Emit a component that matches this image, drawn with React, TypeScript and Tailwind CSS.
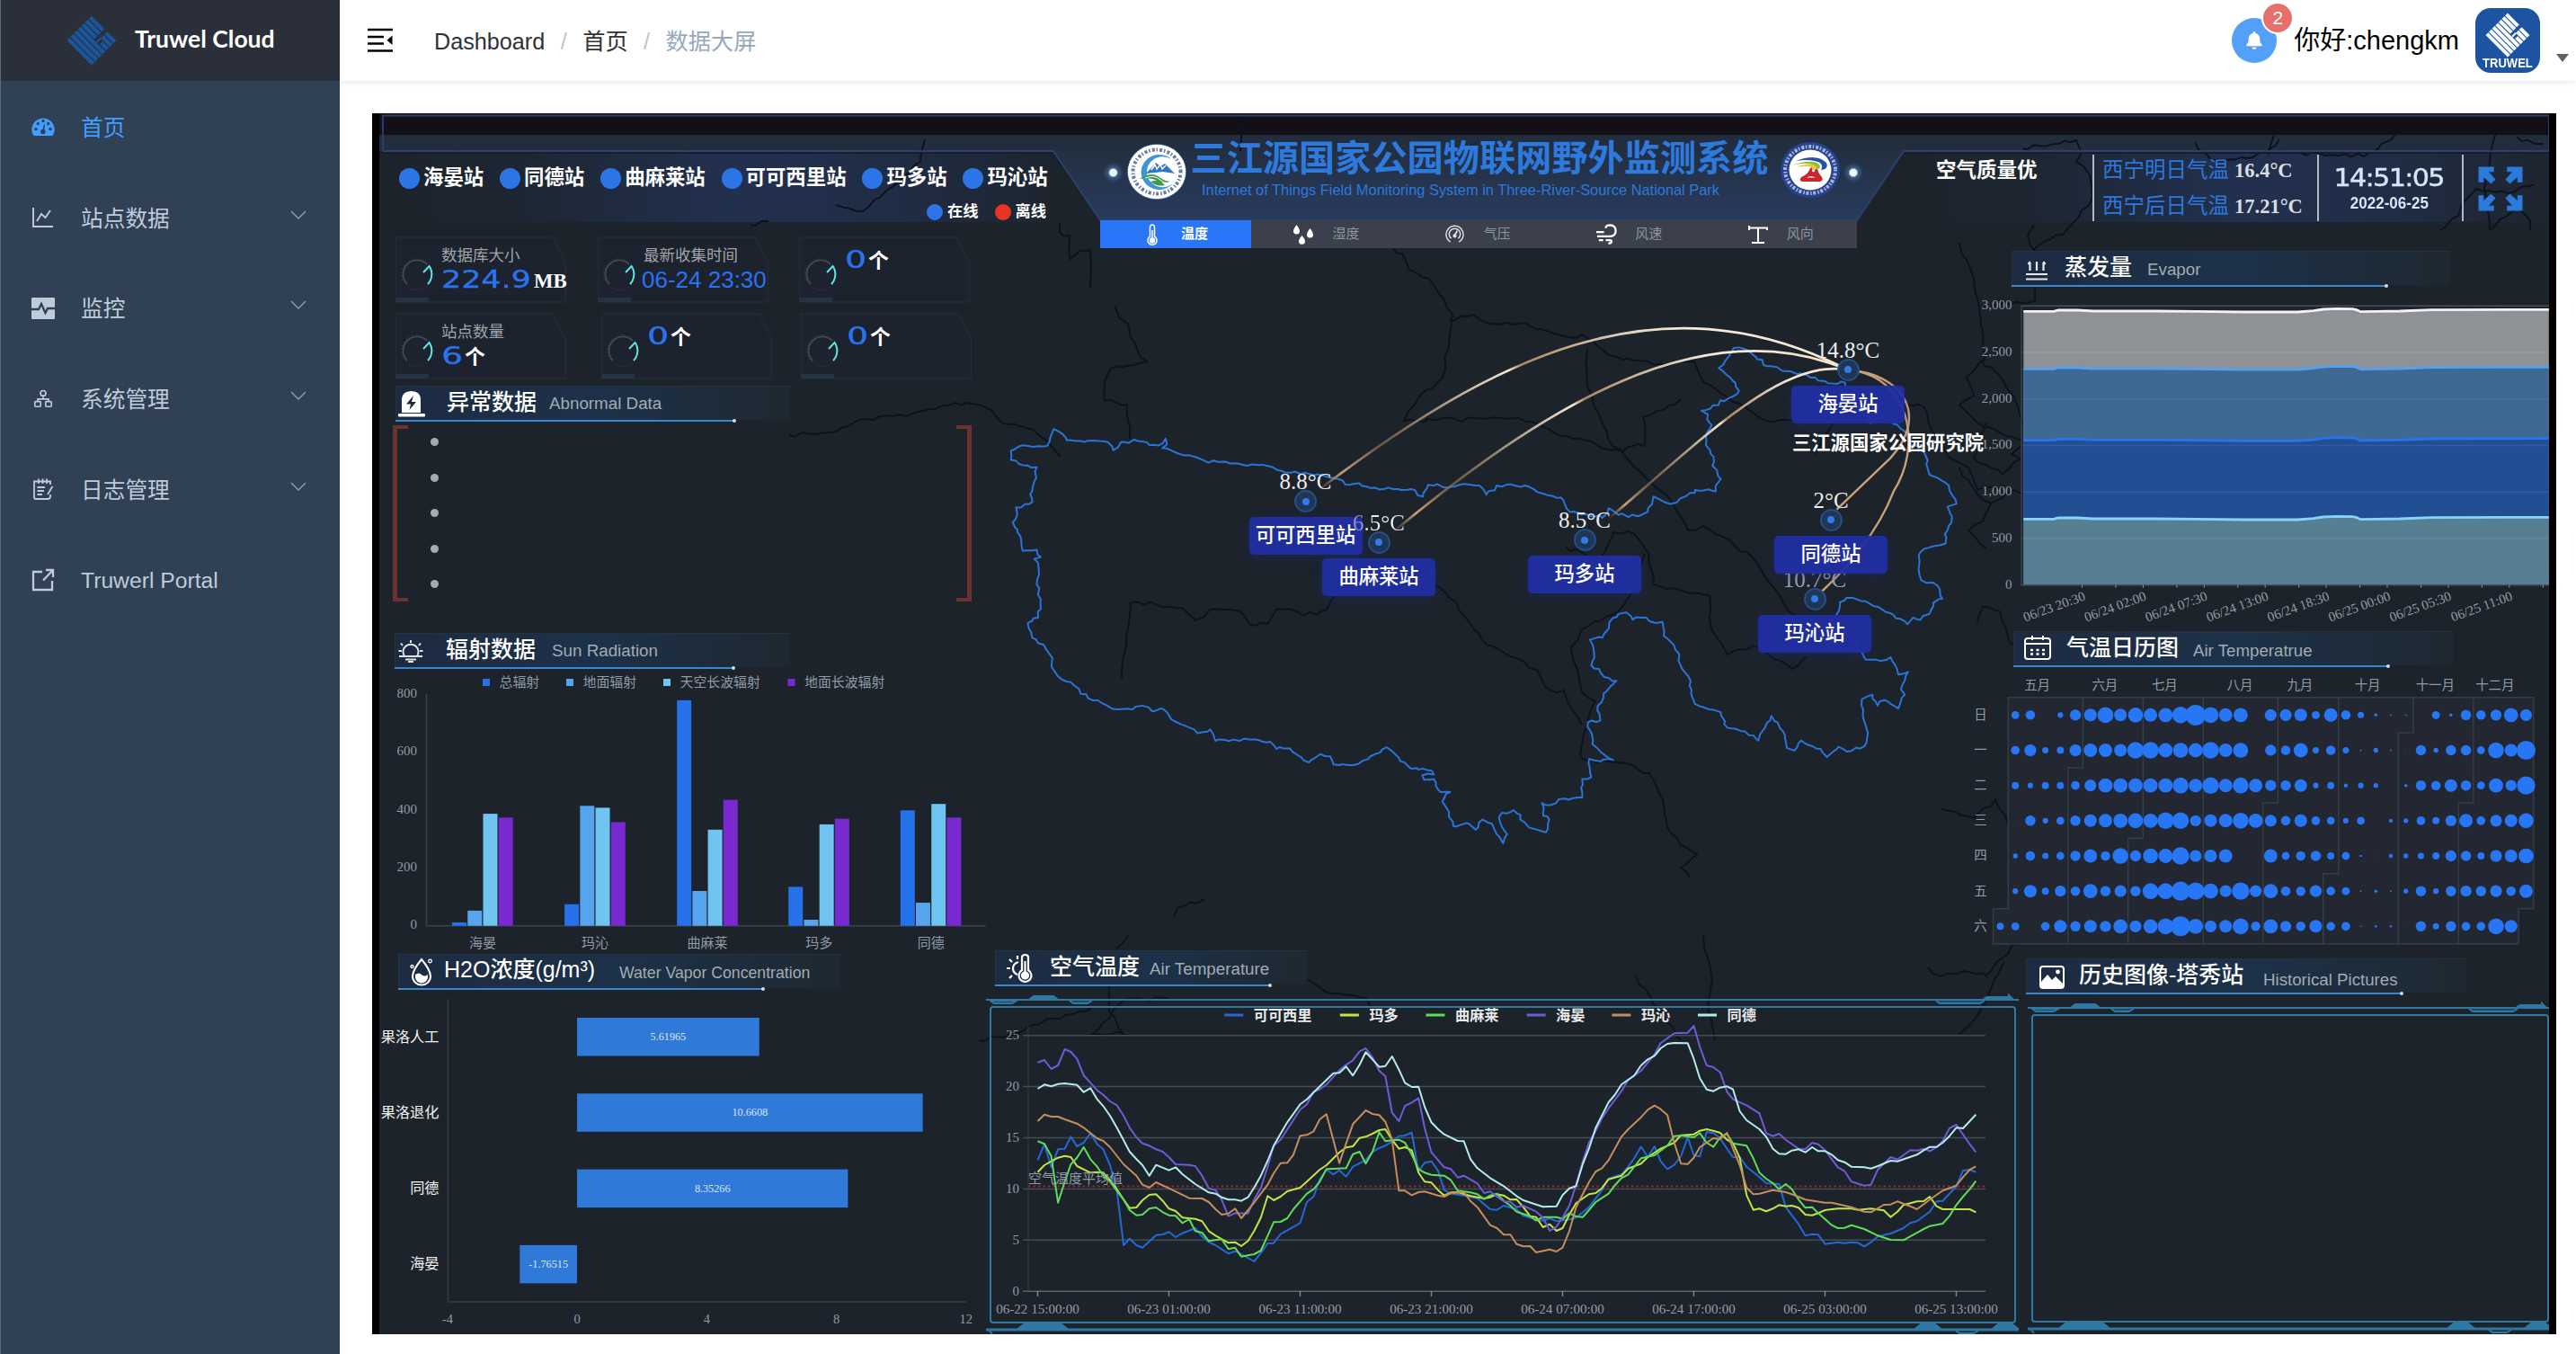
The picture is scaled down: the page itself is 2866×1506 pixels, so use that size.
import React from "react";
import { FaBell } from "react-icons/fa";

type Pt = [number, number];

const parse = (s: string): Pt[] =>
  s.trim().split(/\s+/).map((p) => p.split(",").map(Number) as Pt);

/* Breaks every segment into short, slightly displaced pieces, as a border line on a map has. */
const rough = (s: string, amp: number): string => {
  const pts = parse(s);
  let seed = 7;
  const rnd = () => {
    seed = (seed * 16807) % 2147483647;
    return seed / 2147483647 - 0.5;
  };
  const out: Pt[] = [pts[0]];
  for (let i = 1; i < pts.length; i++) {
    const [x0, y0] = pts[i - 1];
    const [x1, y1] = pts[i];
    const d = Math.hypot(x1 - x0, (y1 - y0) / 1.8);
    const n = Math.max(1, Math.round(d / 7));
    for (let k = 1; k < n; k++) {
      out.push([x0 + ((x1 - x0) * k) / n + rnd() * amp, y0 + ((y1 - y0) * k) / n + rnd() * amp * 1.8]);
    }
    out.push([x1, y1]);
  }
  return out.map((p) => p[0].toFixed(1) + "," + p[1].toFixed(1)).join(" ");
};

const SERIF = "font-['Liberation_Serif','Noto_Sans_CJK_SC',serif]";
const SANS = "font-['Liberation_Sans','Noto_Sans_CJK_SC',sans-serif]";

/* ------------------------------------------------------------------ logos */

function Lozenge({ className, color }: { className: string; color: string }) {
  return (
    <svg viewBox="0 0 52 52" className={className} fill="none" stroke={color} strokeWidth="4.2">
      <g transform="translate(26 26) rotate(45)">
        <path d="M-18 -15.800H1M-18 -10.500H1M-18 -5.200H1" />
        <path d="M-18 0.100H18M-18 5.400H18M-18 10.700H18M-18 16H18" />
        <path d="M5 -15.800H18M5 -10.500H18M9 -5.200H18" />
        <path d="M5 -8.500V-2.500" strokeWidth="2" />
      </g>
    </svg>
  );
}

/* ---------------------------------------------------------------- sidebar */

const menuIcons: Record<string, React.ReactNode> = {
  home: (
    <svg viewBox="0 0 26 22" className="h-[22px] w-[26px]">
      <path d="M2.5 21A12.6 12.6 0 1 1 23.500 21Z" fill="#409eff" />
      <g fill="#304156">
        <circle cx="5" cy="13.500" r="1.700" />
        <circle cx="7.300" cy="7.500" r="1.700" />
        <circle cx="13" cy="4.500" r="1.700" />
        <circle cx="18.700" cy="7.500" r="1.700" />
        <circle cx="21" cy="13.500" r="1.700" />
        <circle cx="12.800" cy="16.500" r="2.800" />
        <path d="M12 16 L14 8 L15 8.300 L14 17Z" />
      </g>
    </svg>
  ),
  chart: (
    <svg viewBox="0 0 26 26" className="h-[26px] w-[26px]" fill="none" stroke="#bfcbd9" strokeWidth="1.900">
      <path d="M2 2V23H24M6 17L11 9L15.500 13L21 5" />
    </svg>
  ),
  monitor: (
    <svg viewBox="0 0 26 26" className="h-[26px] w-[26px]">
      <rect x="0" y="1" width="26" height="24" rx="1" fill="#bfcbd9" />
      <path d="M0 14H8L11 8L15.500 18L18 13H26" fill="none" stroke="#304156" strokeWidth="2.400" />
    </svg>
  ),
  tree: (
    <svg viewBox="0 0 26 26" className="h-[24px] w-[26px]" fill="none" stroke="#bfcbd9" strokeWidth="1.800">
      <circle cx="13" cy="7" r="3.200" />
      <path d="M13 10V14M6.500 17V14H19.500V17" />
      <rect x="3" y="17" width="7" height="6" rx="1" />
      <rect x="16" y="17" width="7" height="6" rx="1" />
    </svg>
  ),
  log: (
    <svg viewBox="0 0 26 26" className="h-[26px] w-[26px]" fill="none" stroke="#bfcbd9" strokeWidth="1.800">
      <path d="M21 8V4.500H3V22Q3 24 5 24H18Q21 24 21 21V19M8 1.500V7M12.500 1.500V7M17 1.500V7M6.500 11H15M6.500 15H14M6.500 19H12M23.500 10L18 19" />
    </svg>
  ),
  link: (
    <svg viewBox="0 0 26 26" className="h-[26px] w-[26px]" fill="none" stroke="#bfcbd9" strokeWidth="2.300">
      <path d="M12 4H2V24H23V14M16 2H24V10M24 2L13 13.500" />
    </svg>
  ),
};

const menu = [
  { icon: "home", text: "首页", active: true, arrow: false },
  { icon: "chart", text: "站点数据", active: false, arrow: true },
  { icon: "monitor", text: "监控", active: false, arrow: true },
  { icon: "tree", text: "系统管理", active: false, arrow: true },
  { icon: "log", text: "日志管理", active: false, arrow: true },
  { icon: "link", text: "Truwerl Portal", active: false, arrow: false },
];

function Sidebar() {
  return (
    <aside className="flex h-full w-[378px] shrink-0 flex-col border-l border-[#5d6a7b] bg-[#304156]">
      <div className="flex h-[90px] shrink-0 items-center bg-[#2b2f3a] pl-[73px]">
        <Lozenge className="size-[56px]" color="#1b559c" />
        <span className="-mt-[2px] ml-[20px] whitespace-nowrap font-[Lato,sans-serif] text-[26.500px] font-bold text-white">Truwel Cloud</span>
      </div>
      <nav className="flex flex-col pt-[1px]">
        {menu.map((m) => (
          <div key={m.text} className="flex h-[100.700px] items-center pl-[34px] pr-[37px]">
            <span className="flex w-[26px] justify-center">{menuIcons[m.icon]}</span>
            <span
              className={
                m.active
                  ? "ml-[29px] mt-[2px] text-[24.700px] text-[#409eff]"
                  : "ml-[29px] mt-[2px] text-[24.700px] text-[#bfcbd9]"
              }
            >
              {m.text}
            </span>
            {m.arrow && (
              <svg viewBox="0 0 18 10" className="mb-[7px] ml-auto h-[10px] w-[18px]" fill="none" stroke="#8d98a6" strokeWidth="1.500">
                <path d="M1 1L9 9L17 1" />
              </svg>
            )}
          </div>
        ))}
      </nav>
    </aside>
  );
}

/* ----------------------------------------------------------------- topbar */

function Topbar() {
  return (
    <header className="flex h-[90px] shrink-0 items-center bg-white pl-[31px] pr-[8px] shadow-[0_1px_6px_rgba(0,21,41,0.12)]">
      <svg viewBox="0 0 28 28" className="h-[28px] w-[28px]" stroke="#000" strokeWidth="2.400">
        <path d="M0 2H28M0 10H18M0 17.500H18M0 25.500H28" />
        <path d="M27.500 8.500V19L21.500 13.700Z" fill="#000" stroke="none" />
      </svg>
      <div className="ml-[46px] mt-[3px] flex items-center text-[25.200px] text-[#303133]">
        <span>Dashboard</span>
        <span className="mx-[17.500px] text-[#c0c4cc]">/</span>
        <span>首页</span>
        <span className="mx-[17.500px] text-[#c0c4cc]">/</span>
        <span className="text-[#97a8be]">数据大屏</span>
      </div>
      <div className="ml-auto flex items-center">
        <div className="relative flex size-[50px] items-center justify-center rounded-full bg-[#53a0f8]">
          <FaBell className="size-[20px] text-white" />
          <span className="absolute -top-[18px] left-[33px] flex h-[36px] w-[36px] items-center justify-center rounded-full border-2 border-white bg-[#e5706c] text-[21px] text-white">
            2
          </span>
        </div>
        <span className="ml-[19px] mt-[2px] whitespace-nowrap text-[29px] text-black">你好:chengkm</span>
        <div className="ml-[18px] flex size-[72px] flex-col items-center rounded-[17px] bg-[#1c54a2] pt-[5px]">
          <Lozenge className="size-[50px]" color="#ffffff" />
          <span className="-mt-[2px] inline-block scale-x-[0.930] text-[14px] font-bold leading-[16px] text-white">TRUWEL</span>
        </div>
        <svg viewBox="0 0 14 9" className="ml-[18px] mt-[38px] h-[9px] w-[14px]">
          <path d="M0 0H14L7 9Z" fill="#606266" />
        </svg>
      </div>
    </header>
  );
}

/* ------------------------------------------------------------ backgrounds */

const borderLine =
  "62,395 75,383 118,382 128,336 142,350 148,366 180,368 212,372 220,394 232,372 244,374 252,365 276,380 290,381 301,362 303,378 296,388 330,408 350,414 367,428 375,422 400,430 445,434 480,450 500,452 530,462 560,470 585,488 600,484 625,496 660,500 680,500 698,520 706,488 720,486 735,496 760,486 785,490 796,515 812,490 855,490 875,508 905,524 915,530 925,562 950,568 975,578 985,552 1000,570 1030,574 1045,562 1054,520 1072,536 1090,536 1100,522 1118,510 1118,502 1150,506 1158,472 1152,448 1145,436 1147,412 1135,380 1135,355 1144,325 1137,310 1138,296 1128,286 1170,252 1186,232 1172,195 1155,170 1165,150 1178,115 1195,118 1205,130 1230,165 1260,178 1330,212 1350,210 1358,260 1378,295 1388,320 1400,306 1430,324 1440,340 1448,370 1472,400 1480,460 1500,478 1510,490 1522,540 1508,548 1515,575 1510,600 1504,622 1505,648 1478,660 1466,672 1465,735 1475,755 1492,762 1500,798 1486,810 1480,840 1466,856 1455,850 1446,868 1424,842 1400,820 1386,810 1375,805 1352,796 1342,808 1337,840 1340,858 1350,890 1368,920 1382,965 1405,968 1420,958 1430,990 1432,1005 1447,998 1436,1045 1442,1060 1432,1098 1410,1075 1400,1090 1392,1060 1376,1072 1378,1100 1380,1135 1385,1165 1380,1200 1352,1215 1340,1202 1322,1230 1312,1208 1290,1195 1282,1185 1272,1212 1260,1205 1257,1170 1236,1118 1222,1160 1216,1185 1195,1160 1168,1150 1158,1108 1140,1100 1118,1085 1112,1055 1108,1010 1096,980 1094,950 1080,915 1070,900 1068,862 1052,862 1035,850 1022,856 1012,836 1000,840 986,862 985,880 975,905 956,910 962,940 958,980 970,990 978,1012 997,1022 982,1050 968,1090 972,1130 953,1135 960,1195 972,1215 992,1238 972,1242 955,1235 958,1285 944,1290 944,1340 930,1342 908,1345 900,1358 882,1355 884,1390 893,1400 888,1435 862,1422 855,1408 838,1375 820,1382 816,1400 828,1440 822,1465 812,1440 805,1412 790,1400 780,1428 765,1410 745,1418 735,1370 728,1352 740,1325 722,1320 715,1290 700,1292 697,1280 715,1278 712,1268 680,1262 670,1245 655,1222 642,1203 632,1218 605,1240 590,1252 560,1250 555,1228 540,1222 522,1245 505,1225 492,1206 472,1208 462,1188 430,1182 415,1186 378,1186 370,1155 350,1165 345,1155 318,1135 310,1128 298,1100 280,1105 265,1090 250,1100 215,1095 170,1058 160,1035 140,1018 125,985 126,960 116,935 95,905 88,865 104,850 108,800 102,760 105,718 98,690 108,685 102,665 80,668 78,640 72,610 65,590 72,568 70,550 95,535 92,515 98,480 102,440 75,432 62,420 62,395";

/* Roads and neighbouring borders, in page coordinates. */
const roads: string[] = [
  "878,484 930,480 950,470 985,462 1015,460 1040,455 1062,448 1090,450 1120,472 1150,478 1180,508",
  "1240,340 1246,354 1255,360 1268,396 1276,402 1236,410 1229,424 1229,446 1254,450 1257,488",
  "1179,247 1179,258 1190,262 1190,288 1202,278 1213,278 1213,320",
  "1550,276 1560,282 1568,300 1590,310 1616,350 1605,420 1580,440 1562,468 1690,465 1750,488 1798,500 1830,496 1830,470 1828,464 1850,456 1870,444",
  "1612,356 1640,350 1656,360 1690,360 1715,366 1745,375 1760,372 1790,395 1840,406 1885,402 1895,425 1960,466 2000,470 2050,440",
  "1766,387 1766,430 1790,490 1830,530 1860,558 1878,590 1895,585 1950,620 1990,680 2060,720",
  "1248,755 1258,670 1315,676 1330,690 1346,678 1380,680 1390,694 1410,694 1420,678 1465,684 1476,678 1490,655 1545,627 1580,640 1620,670 1640,700 1655,718 1680,730 1710,745 1725,768 1740,768 1760,806",
  "1742,608 1780,622 1796,592 1818,594 1834,615 1840,650 1880,660 1902,662 1904,700 1922,728 1950,718 1994,744 2010,730",
  "1830,616 1815,660 1800,680 1760,700 1748,720 1760,770 1775,780 1768,795 1758,840 1762,845 1800,848 1835,860 1850,890 1855,920 1870,940 1888,950 1870,965 1880,976",
  "1340,1000 1310,1010 1306,1020",
  "1256,1040 1232,1070 1234,1125 1250,1150 1215,1150 1250,1112 1300,1110",
  "1360,1090 1440,1080 1480,1105 1520,1110 1530,1130",
  "1895,1040 1905,1090 1900,1120 1908,1157",
  "1820,1085 1850,1130 1870,1157",
  "1090,1157 1130,1150 1150,1140 1215,1120",
  "2145,1076 2160,1086 2185,1080 2210,1085 2250,1040 2262,1000 2272,985 2262,930 2235,920 2220,890 2196,910 2160,900",
  "2230,1070 2215,1100 2200,1130 2180,1150",
  "2020,505 2050,450 2100,445 2140,452 2150,480 2170,510 2190,520 2200,545 2230,540",
  "2263,250 2256,262 2265,280 2264,335 2215,340",
  "2180,270 2196,310 2204,360 2208,400 2188,420 2196,440 2180,450 2200,470 2232,485 2250,490",
  "2204,400 2222,415 2240,440 2250,470 2270,490 2275,530",
  "2210,470 2196,510 2228,527 2248,510 2238,505 2250,495",
  "2180,520 2200,550 2215,560 2240,545 2270,552",
  "2215,560 2206,580 2190,590 2210,610",
  "2200,692 2206,675 2225,680 2232,700 2236,715 2260,724",
  "2250,165 2310,156 2316,170 2310,180 2325,195 2328,220 2300,255 2262,278",
  "2442,158 2460,178 2500,176 2520,170 2536,155",
  "2524,172 2530,150",
  "2560,170 2630,174 2665,150",
  "2776,150 2764,210 2770,256",
  "2800,152 2820,160 2830,160",
  "2715,256 2735,240 2740,225 2755,210 2790,215 2820,205",
  "2770,256 2800,230 2815,245 2815,256",
  "1385,128 1380,168",
  "835,250 855,246",
  "1029,155 1024,180 960,235 930,228",
];

function MapLayer() {
  return (
    <svg viewBox="422 126 2414 1358" className="absolute inset-0 h-full w-full">
      <defs>
        <linearGradient id="hl" x1="0" x2="1">
          <stop offset="0" stopColor="#22304f" stopOpacity="0" />
          <stop offset="0.2" stopColor="#22304f" stopOpacity="0.2" />
          <stop offset="0.52" stopColor="#22304f" />
          <stop offset="0.75" stopColor="#22304f" stopOpacity="0.75" />
          <stop offset="1" stopColor="#22304f" stopOpacity="0.15" />
        </linearGradient>
        <linearGradient id="hc" x1="0" x2="0" y1="0" y2="1">
          <stop offset="0" stopColor="#212c3b" />
          <stop offset="1" stopColor="#293b5e" />
        </linearGradient>
        <linearGradient id="arc" x1="0" x2="1" y1="1" y2="0">
          <stop offset="0" stopColor="#a98155" stopOpacity="0" />
          <stop offset="0.08" stopColor="#c9a075" />
          <stop offset="0.2" stopColor="#8a6d50" stopOpacity="0.7" />
          <stop offset="0.55" stopColor="#f4e6d5" />
          <stop offset="0.58" stopColor="#a8865f" />
          <stop offset="0.85" stopColor="#f6ebdd" />
          <stop offset="1" stopColor="#f4dfc5" />
        </linearGradient>
        <radialGradient id="glow">
          <stop offset="0" stopColor="#fff" />
          <stop offset="0.32" stopColor="#e8f4ff" />
          <stop offset="0.45" stopColor="#4c80ad" stopOpacity="0.6" />
          <stop offset="1" stopColor="#31567c" stopOpacity="0" />
        </radialGradient>
      </defs>
      <rect x="422" y="171" width="748" height="76" fill="url(#hl)" />
      <rect x="2112" y="171" width="724" height="76" fill="url(#hl)" />
      <rect x="422" y="126" width="2414" height="24" fill="#120f16" />
      <path d="M422 150H2836V168H2118L2066 245H1224L1172 168H422Z" fill="url(#hc)" />
      <g fill="none" stroke="#0d131c" strokeWidth="2">
        {roads.map((r) => (
          <polyline key={r} points={rough(r, 3)} />
        ))}
      </g>
      <path d="M426 167V128.500H2836V168H2118L2066 245H1224L1172 168H426" fill="none" stroke="#2b4270" strokeWidth="1.800" />
      <path d="M422 170H1170M2122 170H2836" stroke="#171d26" strokeWidth="1.500" />
      <circle cx="1238.500" cy="192" r="12" fill="url(#glow)" />
      <circle cx="2062" cy="192" r="12" fill="url(#glow)" />
      <g transform="translate(1080 340) scale(0.72066 0.40816)">
        <polyline points={rough(borderLine, 5)} fill="none" stroke="#2a74d8" strokeWidth="2" strokeLinejoin="round" vectorEffect="non-scaling-stroke" />
        <g fill="none" stroke="url(#arc)" strokeWidth="2.700">
          <path d="M535 505C800 150 1060 -92 1354 175" vectorEffect="non-scaling-stroke" />
          <path d="M650 620C880 280 1130 5 1354 175" vectorEffect="non-scaling-stroke" />
          <path d="M985 580C1120 380 1250 140 1354 175" vectorEffect="non-scaling-stroke" />
        </g>
        <g fill="none" stroke="#c9a27a" strokeWidth="2.400">
          <path d="M1354 175C1440 185 1480 300 1420 415L1337 555" vectorEffect="non-scaling-stroke" />
          <path d="M1354 175C1450 190 1470 380 1425 505C1400 620 1350 720 1313 780" vectorEffect="non-scaling-stroke" />
        </g>
      </g>
    </svg>
  );
}

const stationsOnMap = [
  { name: "海晏站", temp: "14.8°C", x: 2056, y: 411.5, dim: false },
  { name: "可可西里站", temp: "8.8°C", x: 1452.500, y: 558, dim: false },
  { name: "曲麻莱站", temp: "6.5°C", x: 1534, y: 603.500, dim: false },
  { name: "玛多站", temp: "8.5°C", x: 1763, y: 601, dim: false },
  { name: "玛沁站", temp: "10.7°C", x: 2019, y: 666.500, dim: true },
  { name: "同德站", temp: "2°C", x: 2037, y: 578.500, dim: false },
];

/* Pins sit at their geographic place on the map canvas. */
function Pins() {
  return (
    <div className={"absolute inset-0 " + SERIF}>
      {stationsOnMap.map((s) => (
        <div
          key={s.name}
          className="absolute flex w-[126px] -translate-x-1/2 flex-col items-center"
          style={{ left: s.x - 414, top: s.y - 126 - 38 }}
        >
          <span
            className={
              s.dim
                ? "h-[25px] text-[25px] leading-[31px] text-[#9da3a9]"
                : s.name === "曲麻莱站"
                  ? "h-[25px] bg-linear-to-r from-[#8c8fd0] from-22% to-[#ececec] to-23% bg-clip-text text-[25px] leading-[31px] text-transparent"
                  : "h-[25px] text-[25px] leading-[31px] text-[#ececec]"
            }
          >
            {s.temp}
          </span>
          <span className="flex size-[25px] items-center justify-center rounded-full border-2 border-[#234f88] bg-[#1f3654]">
            <span className="size-[8px] rounded-full bg-[#2f7bea]" />
          </span>
          <span className="mt-[5px] flex h-[42px] w-[126px] items-center justify-center whitespace-nowrap rounded-[5px] bg-[#212ea3]/95 text-[22.300px] font-medium text-white shadow-[0_3px_14px_rgba(30,45,150,0.35)]">
            {s.name}
          </span>
        </div>
      ))}
      <span className={"absolute left-[1580px] top-[354px] whitespace-nowrap text-[21.300px] font-bold leading-[26px] text-white " + SANS}>三江源国家公园研究院</span>
    </div>
  );
}

/* ----------------------------------------------------------------- header */

const stations = ["海晏站", "同德站", "曲麻莱站", "可可西里站", "玛多站", "玛沁站"];

function SealGreen() {
  return (
    <svg viewBox="0 0 66 62" className="h-[62px] w-[66px] shrink-0">
      <ellipse cx="33" cy="31" rx="32.500" ry="30.500" fill="#fff" stroke="#2f66b5" strokeDasharray="2 1" />
      <ellipse cx="33" cy="31" rx="26.500" ry="24.500" fill="none" stroke="#3a4f80" strokeWidth="4" strokeDasharray="1.500 2.200 3 1.800" opacity="0.75" />
      <path d="M49 17A20 19.500 0 1 0 51 44A17.500 17 0 1 1 49 17Z" fill="#3d95d6" />
      <path d="M21 33L32 21L37 25L42 22L53 33L40 31Z" fill="#2b78c6" />
      <path d="M27 29L31 23L33 28L37 23L39 28L43 24" stroke="#fff" strokeWidth="1.500" fill="none" />
      <path d="M14 39Q27 30 36 37T53 41Q40 45 33 41T14 39ZM26 42Q36 39 42 46Q33 48 26 42Z" fill="#3f9a4c" />
      <path d="M20 38Q30 34 37 40T48 42" stroke="#fff" strokeWidth="1" fill="none" />
    </svg>
  );
}

function SealBlue() {
  return (
    <svg viewBox="0 0 66 62" className="h-[62px] w-[66px] shrink-0">
      <ellipse cx="33" cy="31" rx="33" ry="31" fill="#27428f" />
      <ellipse cx="33" cy="31" rx="28" ry="26" fill="none" stroke="#c9d2ea" strokeWidth="4" strokeDasharray="1.500 2 3 1.600" opacity="0.8" />
      <ellipse cx="33" cy="31" rx="23.500" ry="22.500" fill="#fff" />
      <path d="M17 21Q40 12 51 23Q54 30 45 31Q49 23 38 21Q28 19 17 21Z" fill="#2850a0" />
      <path d="M12 26Q36 18 43 25Q46 30 40 30Q40 26 33 24.500Q24 23 12 26Z" fill="#8abf45" />
      <path d="M17 28Q32 22 40 27Q40 31 36 31Q34 27 29 27Q24 26.500 17 28Z" fill="#f1c531" />
      <path d="M33 29Q36 27 35 32Q35 34 38 33Q38 29 41 30Q42 35 46 39Q48 43 44 44H24Q20 43 23 39Q31 36 33 29Z" fill="#c9272d" />
      <path d="M29 39.500Q34 36.500 39 39.500Z" fill="#fff" />
    </svg>
  );
}

function ScreenHeader() {
  return (
    <div className="relative flex h-[119px] shrink-0">
      <div className="flex w-[802px] flex-col pl-[22px] pt-[57px]">
        <div className={"flex h-[30px] items-center " + SERIF}>
          {stations.map((s) => (
            <div key={s} className="mr-[17.900px] flex items-center whitespace-nowrap text-[22.400px] font-bold leading-[30px] text-white">
              <span className="mr-[4px] size-[23px] rounded-full bg-[#2d75e6]" />
              {s}
            </div>
          ))}
        </div>
        <div className={"mt-[13px] flex h-[20px] items-center pl-[587px] text-[17.300px] font-bold text-white " + SERIF}>
          <span className="mr-[5px] size-[18px] rounded-full bg-[#2d75e6]" />
          在线
          <span className="ml-[18px] mr-[5px] size-[18px] rounded-full bg-[#ec3323]" />
          离线
        </div>
      </div>
      <div className="flex w-[842px] pt-[24px]">
        <div className="ml-[30px] mt-[10px]">
          <SealGreen />
        </div>
        <div className="ml-[4px] flex w-[644px] flex-col items-center whitespace-nowrap text-[#2d79dc]">
          <span className="mt-[1px] text-[40.200px] font-bold leading-[52px]">三江源国家公园物联网野外监测系统</span>
          <span className="-ml-[42px] -mt-[2px] text-[16.400px] leading-[20px]">Internet of Things Field Monitoring System in Three-River-Source National Park</span>
        </div>
        <div className="ml-[13px] mt-[8px]">
          <SealBlue />
        </div>
      </div>
      <div className="flex flex-1 pt-[46px]">
        <span className={"ml-[88px] mt-[5px] w-[174px] whitespace-nowrap text-[22.500px] font-bold leading-[26px] text-white " + SERIF}>空气质量优</span>
        <div className="flex h-[74px] w-[250px] flex-col justify-between border-l-[2px] border-[#b4b8c0] pl-[9px] pt-[2px]">
          {[
            ["西宁明日气温", "16.4°C"],
            ["西宁后日气温", "17.21°C"],
          ].map(([a, b]) => (
            <div key={a} className={"flex h-[32px] items-center whitespace-nowrap " + SERIF}>
              <span className="text-[23.500px] text-[#2d79dc]">{a}</span>
              <span className="ml-[6px] text-[22.500px] font-bold text-[#d9dce0]">{b}</span>
            </div>
          ))}
        </div>
        <div className="flex h-[74px] w-[161px] flex-col items-center border-l-[2px] border-[#b4b8c0] pt-[12px] text-[#d3e6fb]">
          <span className="-ml-[3px] inline-block origin-center scale-x-[1.120] whitespace-nowrap font-['DejaVu_Sans',sans-serif] text-[27px] leading-[28px] tracking-[-1.500px] [-webkit-text-stroke:0.400px_#d3e6fb]">
            14:51:05
          </span>
          <span className="-ml-[3px] mt-[3px] inline-block scale-x-[0.920] text-[18.500px] font-bold leading-[22px]">2022-06-25</span>
        </div>
        <div className="h-[74px] border-l-[2px] border-[#b4b8c0] pl-[16px] pt-[13px]">
          <svg viewBox="0 0 48 48" className="size-[50px]" fill="#2d79dc" stroke="#2d79dc" strokeWidth="1" strokeLinejoin="round">
            {[0, 90, 180, 270].map((a) => (
              <path key={a} transform={"rotate(" + a + " 24 24)"} d="M1 1H16.500V5.500H10.500L18 14L14 18L5.500 10.500V16.500H1Z" />
            ))}
          </svg>
        </div>
      </div>
    </div>
  );
}

/* --------------------------------------------------------- shared widgets */

type TitleProps = { box: string; line: string; icon: React.ReactNode; iconBox: string; text: string; textClass: string; sub: string; subClass: string };

function Title({ box, line, icon, iconBox, text, textClass, sub, subClass }: TitleProps) {
  return (
    <div className={"flex h-[40px] shrink-0 flex-col " + box}>
      <div className="flex h-[38px] items-center whitespace-nowrap border-l border-t border-[#26323d] bg-linear-to-r from-[#1d2b42] via-[#1c3149] via-50% to-[#1e2831]">
        <span className={"flex h-[34px] shrink-0 items-center " + iconBox}>{icon}</span>
        <span className={"-mt-[4px] text-[25px] font-medium leading-[36px] text-white " + textClass}>{text}</span>
        <span className={"leading-[28px] text-[#a3abb3] " + subClass}>{sub}</span>
      </div>
      <div className={"flex h-[2px] items-center justify-end bg-[#3a87cf] " + line}>
        <span className="-mr-[2px] size-[4px] shrink-0 rounded-full bg-white/80" />
      </div>
    </div>
  );
}

function Frame({ x, y, w, h }: { x: number; y: number; w: number; h: number }) {
  const r = x + w;
  return (
    <g fill="none" stroke="#2e78a3" strokeWidth="2">
      <rect x={x} y={y} width={w} height={h} rx="3" />
      <path d={`M${x - 5} ${y - 8}H${r + 4}`} />
      <path d={`M${x + 44} ${y - 9}l4 -3h22l4 3ZM${r - 35} ${y - 9}l4 -2h24v-2l4 4Z`} fill="#2e78a3" />
      <path d={`M${x} ${y - 7}l4 3h20l5 -3ZM${x + 88} ${y - 7}l4 3h16l5 -3M${r - 88} ${y - 7}l4 3h45l5 -3`} fill="#1d4a66" />
      <path d={`M${x - 5} ${y + h + 8}H${r + 4}`} strokeWidth="3" />
      <path d={`M${x + 32} ${y + h + 6}l5 -4h42l5 4ZM${r - 110} ${y + h + 6}l5 -4h16l5 4ZM${r - 24} ${y + h + 6}l5 -4h16l5 4Z`} fill="#2e78a3" />
      <path d={`M${r - 66} ${y + h + 9}l4 3h16l5 -3M${x - 2} ${y + h + 8}l4 5`} />
    </g>
  );
}

/* ------------------------------------------------------------ left column */

function Gauge() {
  return (
    <svg viewBox="0 0 38 38" className="h-[38px] w-[38px] shrink-0" fill="none">
      <circle cx="18" cy="19" r="17.500" stroke="#454d57" strokeDasharray="1 3" />
      <path d="M7 30A15.500 15.500 0 1 1 29 8" stroke="#414a55" strokeWidth="1.800" />
      <path d="M25 17L31.500 10A16 16 0 0 1 30 30" stroke="#5fe6e6" strokeWidth="2" />
    </svg>
  );
}

function Stat({ label, value, plain, unit, ml }: { label?: string; value: string; plain?: boolean; unit?: string; ml: string }) {
  return (
    <div className={"relative h-[74px] w-[190px] shrink-0 " + ml}>
      <svg viewBox="0 0 190 74" className="absolute inset-0 h-full w-full">
        <path d="M0.500 1H175L189.500 30V73H0.500Z" fill="#1d222f" stroke="#232c36" strokeWidth="1.500" />
        <rect x="0" y="68" width="37" height="5" fill="#263442" />
      </svg>
      <div className="relative flex h-full whitespace-nowrap pl-[6px] pt-[10px]">
        <span className="mt-[13px]">
          <Gauge />
        </span>
        <div className="ml-[7px] flex flex-col">
          {label ? <span className="h-[25px] text-[17.500px] leading-[22px] text-[#a0a4a8]">{label}</span> : <span className="h-[3px]" />}
          <div className="flex h-[26px] items-center">
            {plain ? (
              <span className="-ml-[2px] text-[26px] leading-[26px] text-[#2a73f0]">{value}</span>
            ) : value.length > 1 ? (
              <span className="inline-block w-[102px] origin-left scale-x-[1.290] font-['DejaVu_Sans',sans-serif] text-[27px] leading-[26px] text-[#2a73f0] [-webkit-text-stroke:0.400px_#2a73f0]">
                {value}
              </span>
            ) : (
              <span className="inline-block w-[25px] origin-left scale-x-[1.400] font-['DejaVu_Sans',sans-serif] text-[27px] leading-[26px] text-[#2a73f0] [-webkit-text-stroke:0.400px_#2a73f0]">
                {value}
              </span>
            )}
            {unit && <span className={"ml-[1px] mt-[3px] text-[22.800px] font-bold leading-[24px] text-white " + SERIF}>{unit}</span>}
          </div>
        </div>
      </div>
    </div>
  );
}

const sunColors = ["#2672ea", "#56a4ee", "#70c4f2", "#7829d0"];
const sun = [
  { name: "海晏", x: 192, tops: [1461, 1430, 1174, 1184] },
  { name: "玛沁", x: 450, tops: [1413, 1153, 1158, 1196] },
  { name: "曲麻莱", x: 708, tops: [874, 1378, 1216, 1137] },
  { name: "玛多", x: 964, tops: [1367, 1454, 1202, 1187] },
  { name: "同德", x: 1221, tops: [1165, 1409, 1148, 1184] },
];

function SunChart() {
  return (
    <svg viewBox="422 745 680 315" className={"h-[315px] w-[680px] shrink-0 " + SERIF} fontSize="15" fill="#8f9ba8">
      {[
        ["总辐射", 541],
        ["地面辐射", 634],
        ["天空长波辐射", 742],
        ["地面长波辐射", 880.500],
      ].map(([t, x], i) => (
        <g key={t}>
          <rect x={Number(x) - 4} y="754" width="8" height="8" fill={sunColors[i]} />
          <text x={Number(x) + 14.500} y="763" fontSize="14.900">{t}</text>
        </g>
      ))}
      <path d="M474.500 771V1028.700H1097" fill="none" stroke="#3a424b" strokeWidth="1.500" />
      {[800, 600, 400, 200, 0].map((v, i) => (
        <text key={v} x="464" y={775 + i * 64.300} textAnchor="end">{v}</text>
      ))}
      {sun.map((g) => (
        <g key={g.name}>
          {g.tops.map((t, i) => (
            <rect key={i} x={410 + (g.x + i * 35.500) * 0.4847} y={410 + t * 0.4209} width="16" height={(1470 - t) * 0.4209} fill={sunColors[i]} />
          ))}
          <text x={410 + (g.x + 70) * 0.4847} y="1053" textAnchor="middle">{g.name}</text>
        </g>
      ))}
    </svg>
  );
}

const vapor = [
  { name: "果洛人工", v: 5.61965 },
  { name: "果洛退化", v: 10.6608 },
  { name: "同德", v: 8.35266 },
  { name: "海晏", v: -1.76515 },
];

function VaporChart() {
  return (
    <svg viewBox="422 1100 680 384" className={"h-[384px] w-[680px] shrink-0 " + SERIF} fill="#8f9ba8">
      <path d="M498.400 1110V1447H1075" fill="none" stroke="#353e47" strokeWidth="1.500" />
      {vapor.map((d, i) => {
        const w = Math.abs(d.v) * 36.080;
        const x = d.v < 0 ? 642 - w : 642;
        return (
          <g key={d.name}>
            <rect x={x} y={1131 + i * 84.300} width={w} height="42.500" fill="#2f79d8" />
            <text x={x + w / 2} y={1156 + i * 84.300} textAnchor="middle" fontSize="12.200" fill="#dfe6ee">{d.v}</text>
            <text x="488.500" y={1157.500 + i * 84.300} textAnchor="end" fontSize="16.200" fill="#f2f2f2">{d.name}</text>
          </g>
        );
      })}
      {[-4, 0, 4, 8, 12].map((v, i) => (
        <text key={v} x={498 + i * 144.200} y="1471" textAnchor="middle" fontSize="14.500">{v}</text>
      ))}
    </svg>
  );
}

function LeftColumn() {
  return (
    <div className="flex w-[680px] shrink-0 flex-col">
      <div className="flex h-[185px] shrink-0 flex-col pl-[18px] pt-[18px]">
        <div className="flex h-[85px]">
          <Stat label="数据库大小" value="224.9" unit="MB" ml="ml-0" />
          <Stat label="最新收集时间" value="06-24 23:30" plain ml="ml-[35px]" />
          <Stat value="0" unit="个" ml="ml-[34px]" />
        </div>
        <div className="flex">
          <Stat label="站点数量" value="6" unit="个" ml="ml-0" />
          <Stat value="0" unit="个" ml="ml-[39px]" />
          <Stat value="0" unit="个" ml="ml-[32px]" />
        </div>
      </div>
      <Title
        box="-mt-[1px] ml-[18px] w-[439px]"
        line="w-[377px]"
        iconBox="w-[56px] pl-[2px]"
        text="异常数据"
        textClass="w-[114px]"
        sub="Abnormal Data"
        subClass="mt-[1px] text-[18.800px]"
        icon={
          <svg viewBox="0 0 30 30" className="size-[30px]" fill="#fff">
            <path d="M4 25V11Q4 1 15 1Q25 1 25 11V25Z" />
            <rect x="0" y="26" width="30" height="3.500" rx="1" />
            <path d="M17 6L9 15.500H14L12.500 22L20 13H15Z" fill="#1d2b42" />
          </svg>
        }
      />
      <div className="flex h-[235px] shrink-0 justify-between pl-[15px] pr-[21px] pt-[4px]">
        <div className="h-[196px] w-[17px] border-y-[4px] border-l-[5px] border-[#6b3230]" />
        <div className="mr-auto flex h-[196px] flex-col gap-[30.600px] pl-[25px] pt-[14px]">
          {[0, 1, 2, 3, 4].map((i) => (
            <span key={i} className="h-[9px] w-[9px] shrink-0 rounded-full bg-[#a7aaad]" />
          ))}
        </div>
        <div className="h-[196px] w-[17px] border-y-[4px] border-r-[5px] border-[#6b3230]" />
      </div>
      <Title
        box="ml-[17px] w-[440px]"
        line="w-[377px]"
        iconBox="w-[56px] pl-[3px]"
        text="辐射数据"
        textClass="w-[118px]"
        sub="Sun Radiation"
        subClass="mt-[1px] text-[18.800px]"
        icon={
          <svg viewBox="0 0 28 26" className="h-[26px] w-[28px]" fill="none" stroke="#dfe3e6" strokeWidth="2">
            <path d="M7 19A8.500 8.500 0 1 1 21 19M1 19H27M8 22.500H20M11 25H17M14 4V1M5 7L3 4.500M23 7L25 4.500M4 13H0.500M24 13H27.500" />
          </svg>
        }
      />
      <div className="mt-[2px] flex shrink-0">
        <SunChart />
      </div>
      <Title
        box="ml-[21px] w-[492px]"
        line="w-[406px]"
        iconBox="w-[50px] pl-[12px]"
        text="H2O浓度(g/m³)"
        textClass="mt-[-6px] w-[195px]"
        sub="Water Vapor Concentration"
        subClass="mt-[3px] text-[17.700px]"
        icon={
          <svg viewBox="0 0 26 32" className="h-[32px] w-[26px]" fill="none" stroke="#fff" strokeWidth="2">
            <path d="M13 2Q3 14 3 21A10 9.500 0 0 0 23 21Q23 14 13 2Z" />
            <path d="M6 19Q10 16 13 19T20 19V22A7 6.500 0 0 1 6 22Z" fill="#fff" stroke="none" />
            <circle cx="2.500" cy="10" r="1.500" strokeWidth="1.300" />
            <circle cx="22.500" cy="4" r="1.800" strokeWidth="1.300" />
          </svg>
        }
      />
      <VaporChart />
    </div>
  );
}

/* ---------------------------------------------------------- middle column */

const tabIcons = [
  <svg key="t" viewBox="0 0 12 24" className="h-[24px] w-[12px]" fill="none" stroke="#fff" strokeWidth="1.500">
    <path d="M3.500 14V4Q3.500 1 6 1T8.500 4V14A5 5 0 1 1 3.500 14Z" />
    <circle cx="6" cy="18.500" r="2.500" fill="#fff" />
    <path d="M6 7V18" />
  </svg>,
  <svg key="h" viewBox="0 0 24 22" className="h-[22px] w-[24px]" fill="#fff">
    <path d="M4.500 0Q8 4.500 8 7A3.500 3.500 0 0 1 1 7Q1 4.500 4.500 0ZM19.500 4Q23 8.500 23 11A3.500 3.500 0 0 1 16 11Q16 8.500 19.500 4ZM10.500 12Q14 16 14 18.300A3.500 3.500 0 0 1 7 18.300Q7 16 10.500 12Z" />
  </svg>,
  <svg key="p" viewBox="0 0 22 22" className="size-[21px]" fill="none" stroke="#dfe1e4" strokeWidth="1.500">
    <path d="M6 20A10 10 0 1 1 16 20M7 16A6.500 6.500 0 1 1 15 16" />
    <path d="M14 7L11 12" strokeWidth="2" />
    <circle cx="11" cy="13" r="1.500" fill="#dfe1e4" />
  </svg>,
  <svg key="w" viewBox="0 0 24 24" className="size-[23px]" fill="none" stroke="#fff" strokeWidth="2.400">
    <path d="M0 9.500H9M11 5Q11 1.500 16 1.500Q22.500 2 22.500 8Q22.500 14.500 15 14.500H1M3 19H8M11 19H15.500Q18 19 17.500 21T14 22.500" />
  </svg>,
  <svg key="d" viewBox="0 0 22 22" className="size-[22px]" fill="none" stroke="#fff" strokeWidth="2">
    <path d="M1 1V6M1 3.500H21V6M11 3.500V19M4 20H18" />
  </svg>,
];

const tempSeries = [
  {
    name: "可可西里",
    color: "#2468d8",
    lx: 375,
    pts: "99,748 109,695 119,772 129,712 139,710 148,670 157,702 167,690 177,658 187,695 196,712 206,765 216,850 226,1032 235,1010 245,1032 254,1040 274,998 284,996 293,988 303,1005 313,992 332,975 342,1003 352,1022 362,1032 381,1060 391,1052 400,1062 419,1086 429,1058 439,1026 448,1025 458,995 487,958 497,888 507,870 516,812 526,780 536,796 545,782 555,803 565,770 584,748 594,720 604,708 613,700 623,686 633,668 642,666 652,656 662,785 671,757 681,752 691,784 700,848 710,860 729,866 749,876 768,912 778,914 788,900 807,912 817,934 836,946 846,950 856,942 866,952 885,946 895,940 914,905 933,850 943,810 962,796 972,770 981,742 991,703 1001,738 1011,702 1020,752 1030,778 1040,764 1050,735 1060,672 1069,732 1078,736 1088,654 1098,658 1108,675 1118,710 1127,738 1137,738 1147,770 1166,805 1176,825 1195,828 1205,905 1224,962 1234,1000 1244,995 1253,997 1263,1028 1282,1022 1292,1025 1302,1022 1312,1024 1321,1036 1331,1022 1341,1003 1360,993 1379,975 1389,958 1399,952 1418,920 1428,886 1437,884 1457,836 1467,783 1477,780 1486,788",
  },
  {
    name: "玛多",
    color: "#c3e544",
    lx: 546,
    pts: "99,788 109,765 119,752 129,740 139,734 148,738 157,768 177,790 187,788 196,790 206,815 216,845 226,880 235,908 245,906 254,882 264,864 274,862 284,884 293,910 303,918 313,940 332,944 342,952 352,985 362,1000 381,1024 391,1022 400,1035 410,1018 419,985 429,940 439,868 448,882 458,870 468,852 487,840 497,820 516,780 526,765 545,722 555,706 565,702 575,674 584,670 594,660 604,648 613,645 623,680 633,710 642,705 652,715 662,790 671,820 681,823 691,848 700,866 710,856 720,855 739,868 759,876 768,872 778,862 788,866 798,880 807,879 817,905 827,935 836,938 846,972 856,962 866,984 875,975 885,930 895,892 914,862 924,858 933,842 943,812 962,800 972,776 991,760 1001,738 1020,710 1040,690 1050,665 1069,662 1078,650 1088,645 1098,650 1108,657 1118,680 1127,692 1137,740 1147,865 1157,914 1166,910 1176,919 1186,910 1195,898 1205,902 1214,900 1224,907 1234,930 1244,932 1253,925 1263,915 1282,910 1302,910 1312,914 1331,910 1350,916 1360,938 1370,920 1379,898 1399,886 1409,885 1418,870 1428,902 1437,912 1477,912 1486,922",
  },
  {
    name: "曲麻莱",
    color: "#5fdc58",
    lx: 673,
    pts: "99,685 109,694 119,735 129,890 139,820 148,762 157,740 167,705 177,745 187,770 196,800 206,820 216,850 226,880 235,915 245,932 254,930 264,910 274,906 284,922 293,932 303,934 313,958 323,945 332,985 342,990 352,1018 371,1012 381,1045 391,1040 400,1070 410,1066 419,1062 429,1050 439,1000 448,955 458,954 468,942 477,912 497,860 507,845 516,820 526,778 536,777 555,775 565,728 575,720 584,760 594,720 604,655 613,685 623,682 633,680 642,690 652,730 662,778 671,790 681,797 700,800 710,815 720,850 739,856 749,862 759,878 768,866 778,860 788,884 798,900 807,920 827,935 836,950 846,938 866,938 875,944 885,925 895,936 905,938 914,915 924,888 943,860 953,830 962,808 972,796 981,770 991,742 1011,732 1030,700 1040,668 1050,666 1069,672 1078,658 1088,690 1098,704 1108,672 1118,660 1127,692 1147,700 1157,742 1166,790 1176,810 1186,825 1195,845 1205,828 1214,845 1224,880 1234,907 1244,905 1253,925 1263,945 1273,965 1282,975 1292,974 1302,965 1321,978 1341,1000 1360,1014 1379,1015 1399,990 1409,978 1418,968 1437,960 1447,935 1457,898 1467,870 1477,845 1486,818",
  },
  {
    name: "海晏",
    color: "#6f5ad8",
    lx: 822,
    pts: "99,422 109,414 119,444 129,432 139,378 148,387 157,410 167,465 177,490 187,515 196,530 206,552 216,565 226,600 235,640 245,672 254,692 264,700 274,712 284,720 293,738 303,762 323,764 332,768 342,800 352,842 362,848 371,880 381,935 391,925 410,926 419,880 429,840 439,770 448,700 458,680 487,580 497,562 507,520 516,512 526,496 545,448 555,430 565,415 575,385 584,375 594,405 604,450 613,468 623,590 633,618 642,567 652,556 662,541 671,640 681,722 691,748 700,772 710,778 720,806 729,800 749,826 759,858 768,853 778,870 788,886 798,887 807,905 817,900 836,920 846,940 856,984 866,970 875,940 885,900 895,830 905,750 914,690 924,650 933,610 943,575 962,518 972,480 991,450 1011,395 1020,358 1040,325 1060,323 1069,300 1078,370 1088,432 1098,438 1108,455 1118,520 1127,545 1147,565 1166,592 1176,658 1186,668 1195,660 1205,680 1224,710 1234,712 1244,690 1253,695 1263,715 1282,772 1292,785 1302,820 1321,833 1331,830 1341,780 1360,738 1370,746 1389,715 1399,716 1409,710 1418,718 1428,705 1437,685 1447,642 1457,630 1477,695 1486,722",
  },
  {
    name: "玛沁",
    color: "#c58d5a",
    lx: 948,
    pts: "99,618 109,596 119,603 129,603 139,612 157,626 167,640 187,676 196,684 206,705 226,762 235,780 245,800 254,830 264,840 274,822 293,842 323,875 342,876 352,888 362,912 371,930 381,926 391,910 400,942 410,915 419,890 429,860 439,830 448,792 458,758 468,757 477,730 487,667 497,664 507,652 516,612 526,595 536,680 545,758 555,692 565,628 584,582 594,594 604,598 613,620 623,680 633,850 642,850 652,865 662,855 671,853 691,866 700,870 710,858 729,855 739,885 749,905 768,965 778,975 788,997 798,997 807,1028 817,1036 827,1035 836,1056 856,1046 866,1053 875,1040 885,985 895,905 905,860 914,822 924,786 933,776 943,748 962,670 972,645 991,605 1001,580 1011,566 1020,578 1030,598 1040,690 1050,760 1060,761 1069,740 1078,705 1098,675 1108,678 1118,657 1127,710 1137,765 1147,840 1157,862 1166,860 1186,848 1205,855 1214,862 1234,880 1263,890 1273,890 1292,900 1302,905 1321,920 1331,922 1350,897 1360,896 1370,886 1389,902 1399,912 1418,880 1437,850 1457,833 1467,805 1477,780 1486,769",
  },
  {
    name: "同德",
    color: "#b4ecea",
    lx: 1075,
    pts: "99,510 109,496 119,502 129,494 139,492 157,497 167,521 177,508 187,545 196,568 206,600 216,640 226,682 235,720 245,745 254,765 264,800 274,764 293,782 303,772 313,795 332,828 352,856 362,860 371,872 381,880 391,880 400,884 410,872 419,840 429,800 439,750 448,700 458,660 468,622 487,562 497,545 507,522 536,458 545,457 555,436 565,466 575,430 584,388 594,412 604,437 613,434 623,402 633,446 642,490 652,504 662,503 671,570 681,622 691,645 700,662 720,684 729,685 739,745 749,775 768,808 788,835 807,868 817,882 836,896 846,904 866,902 875,865 885,842 895,835 905,760 914,710 924,640 943,555 953,528 962,496 981,466 991,432 1001,412 1011,400 1020,375 1030,360 1040,357 1060,358 1069,410 1078,475 1088,512 1098,518 1108,506 1118,502 1127,512 1137,585 1147,615 1166,645 1176,670 1186,710 1195,727 1205,728 1214,716 1224,712 1234,722 1244,705 1253,718 1263,718 1273,730 1282,748 1292,755 1302,770 1321,772 1331,776 1341,768 1360,750 1370,752 1399,730 1409,715 1418,704 1428,704 1437,690 1447,668 1457,640 1467,642 1477,618 1486,596",
  },
];

const tempTicks = ["06-22 15:00:00", "06-23 01:00:00", "06-23 11:00:00", "06-23 21:00:00", "06-24 07:00:00", "06-24 17:00:00", "06-25 03:00:00", "06-25 13:00:00"];
const tx = (v: number) => 1080 + v * 0.75255;
const ty = (v: number) => 1040 + v / 3;

function TempChart() {
  return (
    <svg viewBox="1092 1096 1160 388" className={"-ml-[10px] h-[388px] w-[1160px] shrink-0 " + SERIF} fill="#8f9ba8" fontSize="15">
      <Frame x={1102} y={1119} w={1140} h={351} />
      {tempSeries.map((s) => (
        <g key={s.name}>
          <rect x={tx(s.lx)} y="1126.500" width="21" height="3" fill={s.color} />
          <text x={tx(s.lx) + 32.500} y="1134" fontSize="16.200" fontWeight="bold" fill="#e8eaec">{s.name}</text>
        </g>
      ))}
      <path d="M1144 1140V1435" stroke="#353e47" />
      {[25, 20, 15, 10, 5, 0].map((v, i) => (
        <g key={v}>
          <path d={`M1138 ${1150.700 + i * 56.900}H2209`} stroke={v === 0 ? "#59626b" : "#434c55"} strokeWidth="1.500" />
          <text x="1134" y={1155 + i * 56.900} textAnchor="end">{v}</text>
        </g>
      ))}
      {tempTicks.map((t, i) => (
        <g key={t}>
          <path d={`M${tx(99 + i * 194)} 1435v6`} stroke="#7b858f" strokeWidth="1.500" />
          <text x={tx(99 + i * 194)} y="1459.500" textAnchor="middle" fontSize="15.100">{t}</text>
        </g>
      ))}
      <path d="M1144 1318.500H2209" stroke="#8c2c2c" strokeWidth="2" strokeDasharray="2.500 3" />
      {tempSeries.map((s) => (
        <polyline
          key={s.name}
          points={parse(s.pts).map((p) => tx(p[0]).toFixed(1) + "," + ty(p[1]).toFixed(1)).join(" ")}
          fill="none"
          stroke={s.color}
          strokeWidth="2"
          strokeLinejoin="round"
        />
      ))}
      <text x="1144" y="1315" fontSize="15">空气温度平均值</text>
    </svg>
  );
}

function MiddleColumn() {
  return (
    <div className="flex w-[1088px] shrink-0 flex-col">
      <div className={"ml-[122px] flex h-[31px] w-[842px] shrink-0 bg-[#3b404c] text-[15px] " + SERIF}>
        {["温度", "湿度", "气压", "风速", "风向"].map((t, i) => (
          <div key={t} className={i === 0 ? "flex flex-1 items-center bg-[#2a76f8] pl-[38px] font-bold text-white" : "flex flex-1 items-center pl-[38px] text-[#8f959e]"}>
            <span className="flex w-[40px] justify-center">{tabIcons[i]}</span>
            <span className="ml-[12px]">{t}</span>
          </div>
        ))}
      </div>
      <div className="flex flex-1 flex-col justify-end">
        <Title
          box="ml-[5px] w-[347px]"
          line="w-[306px]"
          iconBox="w-[60px] pl-[11px]"
          text="空气温度"
          textClass="mt-[-3px] w-[111px]"
          sub="Air Temperature"
          subClass="mt-[3px] text-[18.800px]"
          icon={
            <svg viewBox="0 0 32 34" className="h-[34px] w-[32px]" fill="none" stroke="#fff" strokeWidth="2.200">
              <path d="M18 19V5Q18 2 21.500 2T25 5V19A7 7 0 1 1 18 19Z" />
              <circle cx="21.500" cy="25" r="3.500" fill="#fff" />
              <path d="M21.500 9V24M14 10Q8 12 8 17Q8 22 13 24M1 17H5M4 7L7 10M4 28L7 25M13 3V7" />
            </svg>
          }
        />
        <TempChart />
      </div>
    </div>
  );
}

/* ----------------------------------------------------------- right column */

const wave = "163,0 240,0 252,-4 300,-4 340,-1 500,-1 600,0 720,2 860,2 900,-2 925,-7 960,-9 1000,-8 1010,-5 1020,1 1060,0 1120,-1 1200,-5 1499,-6";
const evap = [
  { base: 229, line: "#f2f2f2", fill: "#8e9195" },
  { base: 421, line: "#53a2f2", fill: "#3d6993" },
  { base: 659, line: "#2773f2", fill: "#224f94" },
  { base: 922, line: "#86d4fb", fill: "#567f92" },
];
const ex = (v: number) => 2180 + v * 0.4375;
const ey = (v: number) => 270 + v / 3;

function EvaporChart() {
  return (
    <svg viewBox="2190 319 646 383" className={"h-[383px] w-[646px] shrink-0 " + SERIF} fill="#8f9ba8" fontSize="15">
      <path d="M2249 340.300H2836M2249 340V650.700H2836" fill="none" stroke="#39424b" strokeWidth="1.500" />
      {evap.map((e) => {
        const line = parse(wave).map((p) => ex(p[0]).toFixed(1) + "," + ey(e.base + p[1]).toFixed(1)).join(" ");
        return (
          <g key={e.base}>
            <polygon points={line + " 2836,650 " + ex(163) + ",650"} fill={e.fill} />
            <polyline points={line} fill="none" stroke={e.line} strokeWidth="2.800" />
          </g>
        );
      })}
      {["3,000", "2,500", "2,000", "1,500", "1,000", "500", "0"].map((t, i) => (
        <g key={t}>
          <path d={`M2249 ${340.300 + i * 51.730}H2836`} stroke="#fff" strokeOpacity="0.08" strokeWidth="1.500" />
          <text x="2238.500" y={344 + i * 51.800} textAnchor="end">{t}</text>
        </g>
      ))}
      {["06/23 20:30", "06/24 02:00", "06/24 07:30", "06/24 13:00", "06/24 18:30", "06/25 00:00", "06/25 05:30", "06/25 11:00"].map((t, i) => (
        <g key={t}>
          <path d={`M${2316.500 + i * 67.900} 650.700v3M${2354 + i * 67.900} 650.700v3`} stroke="#8f9ba8" />
          <text x="0" y="0" textAnchor="end" transform={`translate(${2321 + i * 67.900} 667) rotate(-20)`}>{t}</text>
        </g>
      ))}
    </svg>
  );
}

/* Dot radii per weekday row, one number for each week; 0 leaves the day empty. */
const calendar = [
  [0, 10, 12, 0, 7, 14, 16, 20, 16, 19, 17, 18, 21, 26, 20, 17, 18, 0, 15, 15, 16, 10, 17, 12, 8, 4, 2, 2, 0, 10, 4, 13, 12, 14, 18, 15],
  [0, 11, 15, 8, 9, 15, 17, 17, 16, 21, 21, 18, 19, 18, 21, 17, 19, 0, 14, 12, 18, 8, 12, 8, 2, 6, 2, 1, 13, 6, 13, 13, 10, 20, 16, 24],
  [0, 9, 7, 9, 9, 11, 15, 18, 18, 18, 18, 18, 20, 17, 21, 17, 20, 17, 14, 13, 16, 7, 9, 5, 7, 6, 0, 4, 13, 12, 16, 13, 10, 18, 14, 23],
  [0, 1, 13, 7, 10, 13, 16, 17, 18, 19, 18, 21, 21, 14, 16, 17, 20, 18, 15, 12, 16, 11, 10, 7, 10, 0, 5, 6, 11, 9, 14, 17, 11, 15, 16, 19],
  [0, 6, 12, 8, 10, 13, 17, 12, 20, 14, 19, 18, 22, 15, 16, 17, 0, 0, 17, 10, 12, 13, 9, 10, 3, 1, 5, 6, 8, 9, 14, 13, 9, 15, 16, 19],
  [0, 7, 16, 9, 14, 12, 18, 13, 15, 13, 20, 20, 24, 22, 19, 15, 22, 15, 18, 12, 12, 15, 11, 10, 2, 4, 2, 6, 13, 7, 13, 14, 13, 15, 12, 17],
  [9, 10, 0, 11, 16, 13, 16, 14, 18, 15, 18, 20, 25, 19, 15, 16, 20, 12, 18, 14, 12, 16, 11, 11, 2, 3, 3, 1, 13, 8, 13, 11, 11, 20, 16, 0],
];

function Calendar() {
  const X = (v: number) => 2180 + v * 0.4375;
  const Y = (v: number) => 690 + v / 3;
  const poly = (s: string) => parse(s).map((p) => X(p[0]).toFixed(1) + "," + Y(p[1]).toFixed(1)).join(" ");
  return (
    <svg viewBox="2190 742 646 324" className={"h-[324px] w-[646px] shrink-0 " + SERIF} fill="#8f9ba8" fontSize="14.500">
      <g stroke="#353d46" strokeWidth="1.500" fill="none">
        <polygon points={poly("124,257 1460,257 1460,962 1422,962 1422,1080 86,1080 86,962 124,962")} fill="#222731" />
        {[
          "314,257 314,492 276,492 276,1080",
          "467,257 467,727 429,727 429,1080",
          "620,257 620,1080",
          "810,257 810,609 772,609 772,1080",
          "964,257 964,845 925,845 925,1080",
          "1154,257 1154,375 1116,375 1116,1080",
          "1307,257 1307,609 1269,609 1269,1080",
        ].map((s) => (
          <polyline key={s} points={poly(s)} />
        ))}
      </g>
      {[
        ["五月", 198],
        ["六月", 370],
        ["七月", 522],
        ["八月", 713],
        ["九月", 866],
        ["十月", 1038],
        ["十一月", 1210],
        ["十二月", 1362],
      ].map(([t, x]) => (
        <text key={t} x={X(Number(x))} y="766.500" textAnchor="middle">{t}</text>
      ))}
      {["日", "一", "二", "三", "四", "五", "六"].map((t, r) => (
        <g key={t}>
          <text x="2203.500" y={799.500 + r * 39.200} textAnchor="middle">{t}</text>
          {calendar[r].map((v, i) => v > 0 && <circle key={i} cx={X(104 + 38.200 * i)} cy={Y(316 + r * 117.500)} r={v * 0.44} fill="#2776f6" />)}
        </g>
      ))}
    </svg>
  );
}

function RightColumn() {
  return (
    <div className="flex w-[646px] shrink-0 flex-col pt-[34px]">
      <Title
        box="ml-[48px] w-[488px]"
        line="w-[417px]"
        iconBox="w-[58px] pl-[15px]"
        text="蒸发量"
        textClass="w-[92px]"
        sub="Evapor"
        subClass="mt-[3px] text-[18.800px]"
        icon={
          <svg viewBox="0 0 24 24" className="mt-[2px] size-[24px]" fill="none" stroke="#e6e9ec" strokeWidth="2.200">
            <path d="M0 17H24M0 22.500H24M4.500 13V4M12 13V3M19.500 13V4M2.500 6L4.500 3M21.500 6L19.500 3" />
          </svg>
        }
      />
      <EvaporChart />
      <Title
        box="ml-[50px] w-[489px]"
        line="w-[417px]"
        iconBox="w-[58px] pl-[11px]"
        text="气温日历图"
        textClass="w-[141px]"
        sub="Air Temperatrue"
        subClass="mt-[4px] text-[18.700px]"
        icon={
          <svg viewBox="0 0 30 28" className="-mt-[4px] h-[28px] w-[30px]" fill="none" stroke="#fff" strokeWidth="2">
            <rect x="1" y="4" width="28" height="23" rx="3" />
            <path d="M1 10H29M9 1V6M21 1V6" />
            <path d="M7 17H23M7 21.500H23" strokeDasharray="3 3.500" strokeWidth="2.500" />
          </svg>
        }
      />
      <Calendar />
      <Title
        box="ml-[64px] w-[490px]"
        line="w-[418px]"
        iconBox="w-[58px] pl-[14px]"
        text="历史图像-塔秀站"
        textClass="mt-[-3px] w-[205px]"
        sub="Historical Pictures"
        subClass="mt-[8px] text-[18.700px]"
        icon={
          <svg viewBox="0 0 28 26" className="mt-[2px] h-[26px] w-[28px]">
            <rect x="1" y="1" width="26" height="24" rx="3" fill="none" stroke="#fff" strokeWidth="2" />
            <path d="M2 24V18L9 10L14 16L18 12L26 20V24Z" fill="#fff" />
            <circle cx="20.500" cy="7" r="2.400" fill="#fff" />
          </svg>
        }
      />
      <svg viewBox="2190 1106 646 378" className="h-[378px] w-[646px] shrink-0">
        <Frame x={2261} y={1129} w={574} h={341} />
      </svg>
    </div>
  );
}

/* -------------------------------------------------------------------- app */

export default function App() {
  return (
    <div lang="zh-CN" className={"flex h-[1506px] w-[2866px] overflow-hidden bg-white " + SANS}>
      <Sidebar />
      <main className="flex min-w-0 flex-1 flex-col">
        <Topbar />
        <section className="relative ml-[36px] mt-[36px] flex h-[1358px] w-[2430px] flex-col overflow-hidden border-x-[8px] border-[#040002] bg-[#1c232a]">
          <MapLayer />
          <div className="relative -ml-[8px] h-0 w-0">
            <div className="absolute left-0 top-0 h-[1358px] w-[2430px]">
              <Pins />
            </div>
          </div>
          <ScreenHeader />
          <div className="relative flex flex-1">
            <LeftColumn />
            <MiddleColumn />
            <RightColumn />
          </div>
        </section>
      </main>
    </div>
  );
}
